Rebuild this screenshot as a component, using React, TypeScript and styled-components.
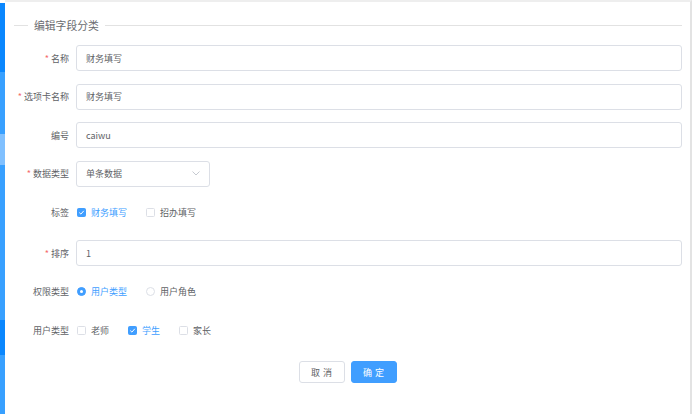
import React from "react";
import styled, { createGlobalStyle } from "styled-components";

const Global = createGlobalStyle`
  html, body { margin: 0; padding: 0; background: #fff; }
  body { font-family: "Noto Sans CJK SC", "Noto Sans", sans-serif; color: #606266; }
  * { box-sizing: border-box; }
`;

const Root = styled.div`
  display: flex;
  width: 693px;
  height: 414px;
  overflow: hidden;
`;

const Strip = styled.div`
  width: 5px;
  margin-top: 3px;
  display: flex;
  flex-direction: column;
`;

const Seg = styled.div<{ $h: number; $c: string }>`
  height: ${(p) => p.$h}px;
  background: ${(p) => p.$c};
  flex-shrink: 0;
`;

const Main = styled.div`
  width: 687px;
  border-top: 2px solid #eeeeee;
  border-right: 2px solid #e3e3e3;
  padding: 0 8px 0 0;
  display: flex;
  flex-direction: column;
`;

const Legend = styled.div`
  display: flex;
  align-items: center;
  height: 16px;
  margin-top: 15px;
  padding-left: 9px;
  gap: 4px;
`;

const Line = styled.div<{ $w?: number }>`
  height: 1px;
  background: #e2e2e2;
  ${(p) => (p.$w ? `width: ${p.$w}px;` : "flex: 1;")}
`;

const LegendText = styled.span`
  font-size: 10.8px;
  color: #6a6c70;
  padding: 0 2px;
`;

const Form = styled.div`
  display: flex;
  flex-direction: column;
  gap: 12.5px;
  margin-top: 12px;
`;

const Row = styled.div<{ $extra?: number }>`
  display: grid;
  grid-template-columns: 64px 1fr;
  column-gap: 7px;
  align-items: center;
  height: 26px;
  margin-top: ${(p) => p.$extra || 0}px;
`;

const Label = styled.label`
  text-align: right;
  font-size: 9px;
  color: #606266;
  white-space: nowrap;
`;

const Star = styled.span`
  color: #f56c6c;
  margin-right: 2px;
`;

const Input = styled.div<{ $w?: number }>`
  height: 26px;
  width: ${(p) => (p.$w ? `${p.$w}px` : "100%")};
  border: 1px solid #dcdfe6;
  border-radius: 3px;
  padding: 0 9px;
  display: flex;
  align-items: center;
  justify-content: space-between;
  font-size: 9px;
  color: #606266;
`;

const Group = styled.div`
  display: flex;
  align-items: center;
`;

const Item = styled.div<{ $gap: number }>`
  display: flex;
  align-items: center;
  margin-right: ${(p) => p.$gap}px;
  font-size: 9px;
  color: #606266;
`;

const Box = styled.span<{ $on?: boolean }>`
  width: 9px;
  height: 9px;
  border: 1px solid ${(p) => (p.$on ? "#409eff" : "#dcdfe6")};
  background: ${(p) => (p.$on ? "#409eff" : "#fff")};
  border-radius: 1.5px;
  margin-left: 1px;
  margin-right: 5px;
  display: flex;
  align-items: center;
  justify-content: center;
`;

const Circle = styled.span<{ $on?: boolean }>`
  width: 9px;
  height: 9px;
  border-radius: 50%;
  border: 1px solid ${(p) => (p.$on ? "#409eff" : "#dcdfe6")};
  background: ${(p) => (p.$on ? "#409eff" : "#fff")};
  margin-left: 1px;
  margin-right: 5px;
  display: flex;
  align-items: center;
  justify-content: center;
  &::after {
    content: "";
    width: 3px;
    height: 3px;
    border-radius: 50%;
    background: #fff;
    display: ${(p) => (p.$on ? "block" : "none")};
  }
`;

const ItemText = styled.span<{ $on?: boolean }>`
  color: ${(p) => (p.$on ? "#409eff" : "#606266")};
`;

const Buttons = styled.div`
  display: flex;
  justify-content: center;
  gap: 6px;
  margin-top: 18px;
  padding-left: 8px;
`;

const Button = styled.button<{ $primary?: boolean }>`
  width: 46px;
  height: 22px;
  border-radius: 3px;
  font-family: inherit;
  font-size: 9px;
  letter-spacing: 3px;
  padding: 0 0 0 3px;
  cursor: pointer;
  border: 1px solid ${(p) => (p.$primary ? "#409eff" : "#dcdfe6")};
  background: ${(p) => (p.$primary ? "#409eff" : "#fff")};
  color: ${(p) => (p.$primary ? "#fff" : "#606266")};
`;

const Check = () => (
  <svg width="7" height="7" viewBox="0 0 7 7">
    <path d="M1.3 3.6 L2.9 5.1 L5.8 1.8" fill="none" stroke="#fff" strokeWidth="1" />
  </svg>
);

const Chevron = () => (
  <svg width="8" height="5" viewBox="0 0 8 5">
    <path d="M0.5 0.5 L4 4 L7.5 0.5" fill="none" stroke="#c0c4cc" strokeWidth="0.9" />
  </svg>
);

const CheckItem = ({ on, text, gap }: { on?: boolean; text: string; gap: number }) => (
  <Item $gap={gap}>
    <Box $on={on}>{on && <Check />}</Box>
    <ItemText $on={on}>{text}</ItemText>
  </Item>
);

const RadioItem = ({ on, text, gap }: { on?: boolean; text: string; gap: number }) => (
  <Item $gap={gap}>
    <Circle $on={on} />
    <ItemText $on={on}>{text}</ItemText>
  </Item>
);

export default function App() {
  return (
    <>
      <Global />
      <Root>
        <Strip>
          <Seg $h={69} $c="#0a87fe" />
          <Seg $h={62} $c="#38a0ff" />
          <Seg $h={31} $c="#80c0ff" />
          <Seg $h={155} $c="#38a0ff" />
          <Seg $h={35} $c="#0a87fe" />
          <Seg $h={59} $c="#38a0ff" />
        </Strip>
        <Main>
          <Legend>
            <Line $w={14} />
            <LegendText>编辑字段分类</LegendText>
            <Line />
          </Legend>
          <Form>
            <Row>
              <Label><Star>*</Star>名称</Label>
              <Input>财务填写</Input>
            </Row>
            <Row>
              <Label><Star>*</Star>选项卡名称</Label>
              <Input>财务填写</Input>
            </Row>
            <Row>
              <Label>编号</Label>
              <Input>caiwu</Input>
            </Row>
            <Row>
              <Label><Star>*</Star>数据类型</Label>
              <Input $w={134}>
                <span>单条数据</span>
                <Chevron />
              </Input>
            </Row>
            <Row>
              <Label>标签</Label>
              <Group>
                <CheckItem on text="财务填写" gap={18} />
                <CheckItem text="招办填写" gap={0} />
              </Group>
            </Row>
            <Row $extra={2.5}>
              <Label><Star>*</Star>排序</Label>
              <Input>1</Input>
            </Row>
            <Row>
              <Label>权限类型</Label>
              <Group>
                <RadioItem on text="用户类型" gap={18} />
                <RadioItem text="用户角色" gap={0} />
              </Group>
            </Row>
            <Row>
              <Label>用户类型</Label>
              <Group>
                <CheckItem text="老师" gap={18} />
                <CheckItem on text="学生" gap={18} />
                <CheckItem text="家长" gap={0} />
              </Group>
            </Row>
          </Form>
          <Buttons>
            <Button>取消</Button>
            <Button $primary>确定</Button>
          </Buttons>
        </Main>
      </Root>
    </>
  );
}
